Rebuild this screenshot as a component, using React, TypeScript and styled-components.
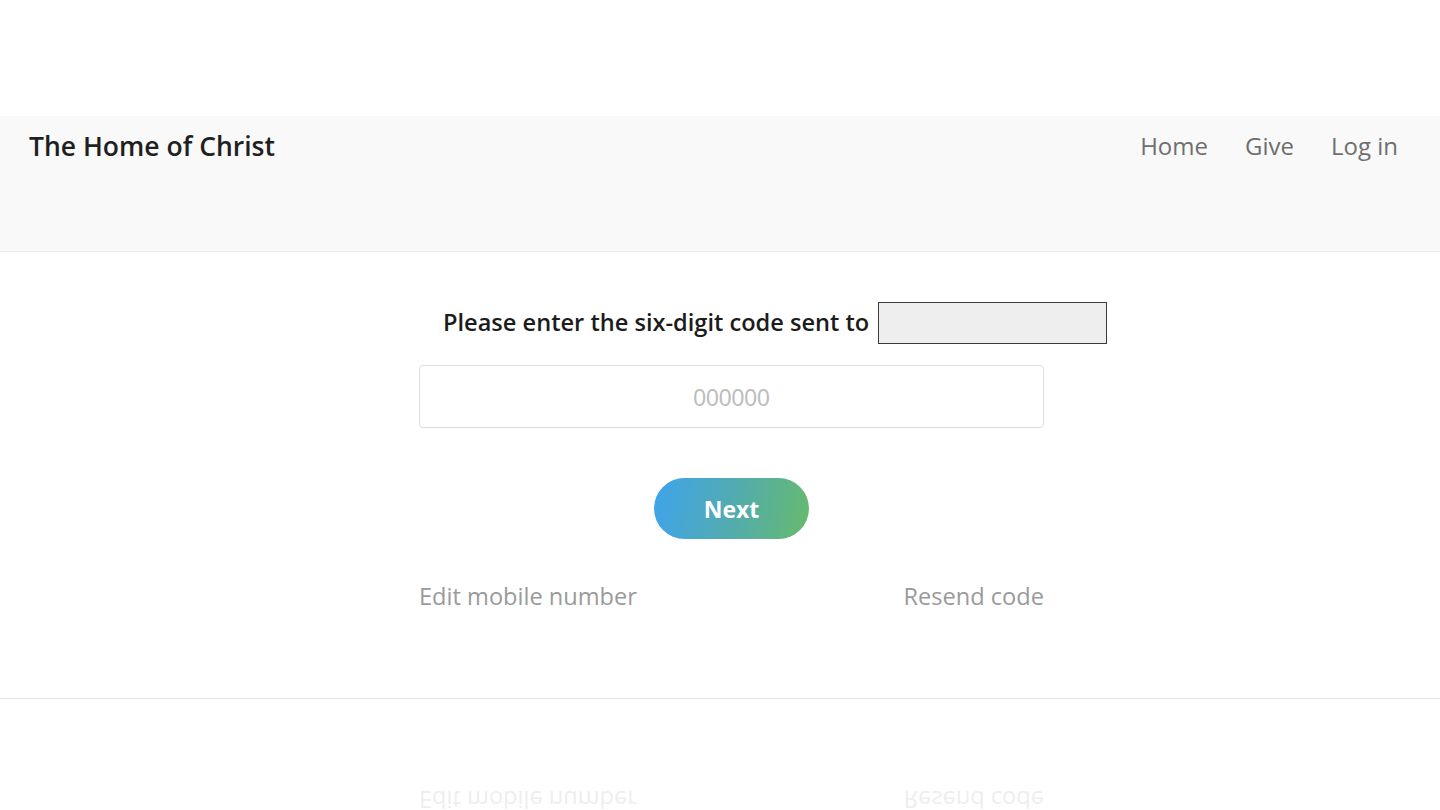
import React from "react";
import styled, { createGlobalStyle } from "styled-components";

const Global = createGlobalStyle`
  html, body { margin: 0; padding: 0; background: #ffffff; }
  body { font-family: "Open Sans", "Noto Sans", sans-serif; color: #222; overflow: hidden; }
  * { box-sizing: border-box; }
`;

const Page = styled.div`
  width: 1440px;
  height: 810px;
  overflow: hidden;
  padding-top: 116px;
  display: flex;
  flex-direction: column;
`;

const Header = styled.header`
  flex-shrink: 0;
  height: 136px;
  background: #f9f9f9;
  border-bottom: 1px solid #ececec;
  display: flex;
  justify-content: space-between;
  align-items: flex-start;
  padding: 12px 42px 0 29px;
`;

const Brand = styled.div`
  font-size: 26.5px;
  font-weight: 600;
  color: #1f1f1f;
  line-height: 36px;
`;

const Nav = styled.nav`
  display: flex;
  gap: 37px;
`;

const NavLink = styled.a`
  font-size: 24px;
  color: #6f6f6f;
  line-height: 36px;
  text-decoration: none;
`;

const Main = styled.main`
  flex-shrink: 0;
  padding-left: 23px;
  display: flex;
  flex-direction: column;
  align-items: center;
  height: 447px;
  border-bottom: 1px solid #e6e6e6;
`;

const Form = styled.div`
  width: 625px;
  display: flex;
  flex-direction: column;
  align-items: stretch;
`;

const Prompt = styled.div`
  margin-top: 50px;
  margin-left: 24px;
  width: max-content;
  display: flex;
  align-items: center;
  gap: 9px;
  white-space: nowrap;
  font-size: 23.6px;
  line-height: 40px;
  font-weight: 600;
  color: #1c1c1c;
`;

const PromptText = styled.span`
  position: relative;
  top: -1px;
`;

const NumberBox = styled.span`
  flex-shrink: 0;
  display: inline-block;
  width: 229px;
  height: 42px;
  background: #eeeeee;
  border: 1px solid #3a3a3a;
`;

const CodeInput = styled.input`
  margin-top: 21px;
  height: 63px;
  padding-top: 4px;
  border: 1px solid #dddddd;
  border-radius: 4px;
  text-align: center;
  font-family: "Liberation Sans", Arial, sans-serif;
  font-size: 23px;
  color: #333;
  outline: none;
  &::placeholder { color: #bdbdbd; }
`;

const NextButton = styled.button`
  align-self: center;
  margin-top: 50px;
  width: 155px;
  height: 61px;
  border: none;
  border-radius: 31px;
  background: linear-gradient(100deg, #3ea4ec 0%, #52abb0 50%, #66ba6c 100%);
  color: #ffffff;
  font-family: "Open Sans", sans-serif;
  font-size: 23px;
  font-weight: 700;
`;

const LinksRow = styled.div<{ $mirror?: boolean }>`
  display: flex;
  justify-content: space-between;
  margin-top: ${(p) => (p.$mirror ? "0" : "41px")};
  line-height: 32px;
  ${(p) => (p.$mirror ? "transform: scaleY(-1); opacity: 0.16;" : "")}
`;

const TextLink = styled.a`
  font-size: 23.6px;
  color: #9a9a9a;
  text-decoration: none;
`;

const Reflection = styled.div`
  flex-shrink: 0;
  padding-left: 23px;
  padding-top: 85px;
  display: flex;
  justify-content: center;
`;

export default function App() {
  return (
    <>
      <Global />
      <Page>
        <Header>
          <Brand>The Home of Christ</Brand>
          <Nav>
            <NavLink>Home</NavLink>
            <NavLink>Give</NavLink>
            <NavLink>Log in</NavLink>
          </Nav>
        </Header>
        <Main>
          <Form>
            <Prompt>
              <PromptText>Please enter the six-digit code sent to</PromptText>
              <NumberBox />
            </Prompt>
            <CodeInput placeholder="000000" />
            <NextButton>Next</NextButton>
            <LinksRow>
              <TextLink>Edit mobile number</TextLink>
              <TextLink>Resend code</TextLink>
            </LinksRow>
          </Form>
        </Main>
        <Reflection>
          <Form>
            <LinksRow $mirror>
              <TextLink>Edit mobile number</TextLink>
              <TextLink>Resend code</TextLink>
            </LinksRow>
          </Form>
        </Reflection>
      </Page>
    </>
  );
}
